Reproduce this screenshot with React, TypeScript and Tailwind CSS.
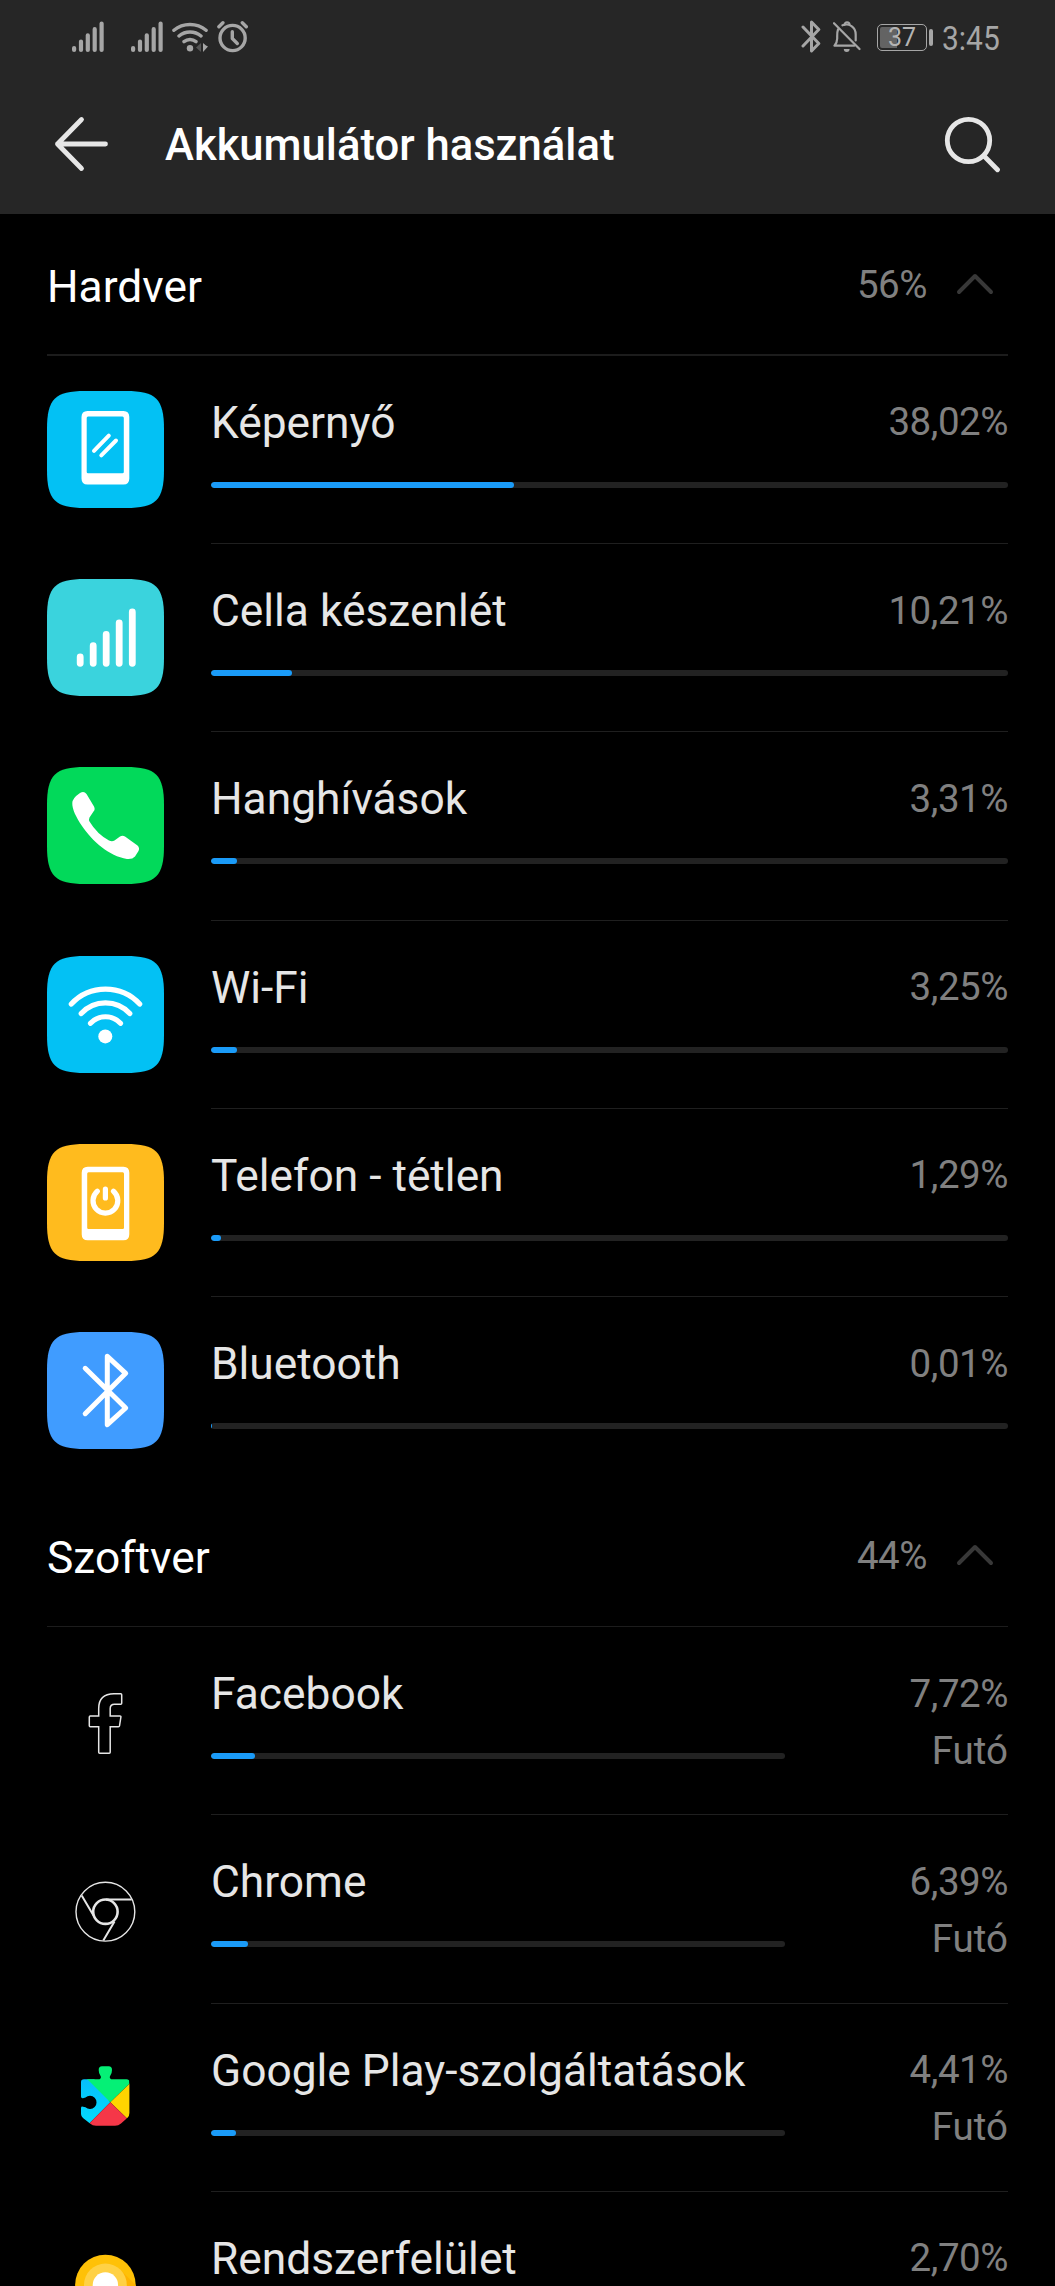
import type { ReactNode } from "react";

type UsageItem = {
  name: string;
  value: string;
  percent: number;
  icon: ReactNode;
  running?: boolean;
};

/* Status bar */

function SignalBars() {
  return (
    <svg width="32" height="32" viewBox="0 0 32 32" stroke="#a6a6a6" strokeWidth="4.2" strokeLinecap="round">
      <path d="M2.1 27v2M9 20.5v8.5M15.8 14.3v14.7M22.7 8.2v20.8M29.6 2.6v26.4" />
    </svg>
  );
}

function StatusWifi() {
  return (
    <svg className="ml-[9px]" width="36" height="32" viewBox="0 0 36 32" fill="none" stroke="#a6a6a6" strokeWidth="3.4" strokeLinecap="round">
      <path d="M1.9 9.3A25 25 0 0 1 34.1 9.3M7 15A17 17 0 0 1 29 15M12 20.6A9.5 9.5 0 0 1 24 20.6" />
      <circle cx="18" cy="27.2" r="3.2" fill="#a6a6a6" stroke="none" />
      <path d="M29 22v9l-5-4.5z" fill="#555" stroke="none" />
      <path d="M31 22v9l5-5.5-2-1z" fill="#a6a6a6" stroke="none" />
    </svg>
  );
}

function AlarmIcon() {
  return (
    <svg className="ml-[9px]" width="32" height="32" viewBox="0 0 32 32" fill="none" stroke="#a6a6a6" strokeWidth="3.4" strokeLinecap="round" strokeLinejoin="round">
      <circle cx="15.6" cy="17" r="12.6" />
      <path d="M15.3 10.7v6.8l5 5" />
      <path d="M1.9 5.8l4-4M29.3 5.8l-4-4" />
    </svg>
  );
}

function StatusBluetooth() {
  return (
    <svg width="20" height="33" viewBox="0 0 20 33" fill="none" stroke="#a6a6a6" strokeWidth="3" strokeLinejoin="round" strokeLinecap="round">
      <path d="M2 7l15.8 16.5-7.3 7.5V2l7.3 7.5L2 26" />
    </svg>
  );
}

function BellOff() {
  return (
    <svg className="ml-[12px]" width="28" height="32" viewBox="0 0 28 32" fill="none" stroke="#a6a6a6" strokeWidth="2.2" strokeLinecap="round" strokeLinejoin="round">
      <path d="M5 8.5C4 11 4.2 14 4.2 17.5c0 3.5-.8 4.8-2.7 7.2h19.7M9.5 4.3c6.5-2.5 13.2 1.5 13.2 9.2v6" />
      <path d="M11.5 3.8c0-3.2 5-3.2 5 0" />
      <path d="M1 2.2l25.5 25.8" />
      <path d="M10.8 28h5.8a2.9 2.9 0 0 1-5.8 0z" fill="#a6a6a6" stroke="none" />
    </svg>
  );
}

function Battery({ level }: { level: number }) {
  return (
    <div className="ml-[16px] flex items-center gap-[2px] pt-[2px]">
      <div className="relative flex h-[27px] w-[50px] items-center justify-center rounded-[5px] border border-[#a6a6a6]">
        <div className="absolute top-[2px] bottom-[2px] left-[2px] rounded-l-[2px] bg-[#636363]" style={{ width: level * 0.46 }} />
        <span className="relative text-[25px] leading-none text-[#b4b4b4]">{level}</span>
      </div>
      <div className="h-[17px] w-[4px] rounded-[2px] bg-[#a6a6a6]" />
    </div>
  );
}

function StatusBar() {
  return (
    <div className="flex h-[73px] items-center justify-between pr-[55px] pl-[72px]">
      <div className="flex items-center">
        <SignalBars />
        <div className="w-[27px]" />
        <SignalBars />
        <StatusWifi />
        <AlarmIcon />
      </div>
      <div className="flex items-center">
        <StatusBluetooth />
        <BellOff />
        <Battery level={37} />
        <span className="ml-[9px] w-[58px] origin-left scale-x-[0.88] pt-[3px] text-[34px] leading-[40px] text-[#a6a6a6]">3:45</span>
      </div>
    </div>
  );
}

/* Item icons, all drawn on a 117px tile */

function Tile({ fill, children }: { fill?: string; children: ReactNode }) {
  return (
    <svg className="block shrink-0" width="117" height="117" viewBox="0 0 117 117" fill="none">
      {fill && (
        <path fill={fill} d="M0 38C0 8 8 0 38 0H79C109 0 117 8 117 38V79C117 109 109 117 79 117H38C8 117 0 109 0 79Z" />
      )}
      {children}
    </svg>
  );
}

const screenIcon = (
  <Tile fill="#03c1f4">
    <path
      fill="#fff"
      fillRule="evenodd"
      d="M40.5 20H76.5Q82.3 20 82.3 26V87.5Q82.3 93.5 76.5 93.5H40.5Q34.5 93.5 34.5 87.5V26Q34.5 20 40.5 20ZM41 25.5Q39.7 25.5 39.7 27V81Q39.7 82.3 41 82.3H75.5Q76.8 82.3 76.8 81V27Q76.8 25.5 75.5 25.5Z"
    />
    <path d="M47 59.8L61.8 44.7M54.3 64.3L69 49.5" stroke="#fff" strokeWidth="4" strokeLinecap="round" />
  </Tile>
);

const cellIcon = (
  <Tile fill="#3ad3dd">
    <path d="M33.2 78v6.3M46.2 66.7v17.6M59.2 55.4v28.9M72.2 43.8v40.5M85.3 33v51.3" stroke="#fff" strokeWidth="6.8" strokeLinecap="round" />
  </Tile>
);

const callIcon = (
  <Tile fill="#02d95a">
    <path
      fill="#fff"
      d="M33 26Q37 23.5 39.5 27L47 39.5Q48.5 42.5 46.5 44.5L42.5 50.5Q41.5 52.5 42.5 54.5Q50 67 62 73.5Q65 75 67.5 73.5L73 69.5Q75.5 68 78 69.5L90.5 78.5Q93 81 91.5 84L88 89.5Q85.5 92.5 80 92C62 89 45 74 35 59C29 50 25 42 25.3 36Q25.5 31 33 26Z"
    />
  </Tile>
);

const wifiIcon = (
  <Tile fill="#03c1f4">
    <path
      d="M24.3 48A46.8 46.8 0 0 1 92.7 48M34.2 57.5A33 33 0 0 1 82.8 57.5M43.5 67.3A20.5 20.5 0 0 1 73.5 67.3"
      stroke="#fff"
      strokeWidth="5.2"
      strokeLinecap="round"
    />
    <circle cx="58.3" cy="80.4" r="7" fill="#fff" />
  </Tile>
);

const idleIcon = (
  <Tile fill="#ffbb1e">
    <path
      fill="#fff"
      fillRule="evenodd"
      d="M40.7 22.7H76.5Q82.3 22.7 82.3 28.7V90.3Q82.3 96.3 76.5 96.3H40.7Q34.7 96.3 34.7 90.3V28.7Q34.7 22.7 40.7 22.7ZM41.5 28.3Q40.2 28.3 40.2 29.8V83.7Q40.2 85 41.5 85H75.7Q77 85 77 83.7V29.8Q77 28.3 75.7 28.3Z"
    />
    <path d="M50.3 47.3A12.4 12.4 0 1 0 66.5 47.3M58.4 45.2V54" stroke="#fff" strokeWidth="5.2" strokeLinecap="round" />
  </Tile>
);

const bluetoothIcon = (
  <Tile fill="#409cff">
    <path d="M38.2 36.3L78.7 76L60.3 92.7V24.3L78.7 41.3L38.2 81.7" stroke="#fff" strokeWidth="5" strokeLinecap="round" strokeLinejoin="round" />
  </Tile>
);

const facebookIcon = (
  <Tile>
    <path
      d="M73.7 31.7Q74.7 31.7 74.7 32.7V41.2Q74.7 42.2 73.7 42.2H67.5Q63.2 42.2 63.2 46.5V54H73Q74 54 73.9 55L72.5 63.9Q72.3 64.8 71.4 64.8H63.2V90.3Q63.2 91.3 62.2 91.3H52.7Q51.7 91.3 51.7 90.3V64.8H43.3Q42.3 64.8 42.3 63.8V55Q42.3 54 43.3 54H51.7V46.5C51.7 36 58 31.7 67 31.7Z"
      stroke="#e6e6e6"
      strokeWidth="1.5"
    />
  </Tile>
);

const chromeIcon = (
  <Tile>
    <g stroke="#e6e6e6">
      <circle cx="58.4" cy="61.7" r="29.4" strokeWidth="1.4" />
      <circle cx="58.4" cy="61.7" r="12.2" strokeWidth="2.6" />
      <path d="M59 49.4H84.7M34.7 45.4L46.5 65.5M56.3 90.6L67.5 71.5" strokeWidth="2" />
    </g>
  </Tile>
);

const playServicesIcon = (
  <Tile>
    <clipPath id="puzzle">
      <path d="M37 40.2H52.5Q55 39 53.2 36.3Q51.7 34 51.7 31Q51.7 27.3 55 27.3H61.7Q65 27.3 65 31Q65 34 63.5 36.3Q61.7 39 64.2 40.2H79.5Q82.4 40.2 82.4 43V74Q82.4 77 80.5 78.7L74 84.5Q71.5 86.7 68 86.7H49Q45.5 86.7 43 84.5L36 79Q34 77.3 34 75V69Q34 67.3 36 67.7L38.5 68.3A6.6 6.6 0 1 0 38.5 58.5L36 59.2Q34 59.5 34 57.5V43Q34 40.2 37 40.2Z" />
    </clipPath>
    <linearGradient id="playBlue" x1="0" y1="0" x2="0" y2="1">
      <stop stopColor="#07b7fb" />
      <stop offset="1" stopColor="#02e0fd" />
    </linearGradient>
    <g clipPath="url(#puzzle)">
      <path fill="url(#playBlue)" d="M30 30H40.3L63.3 63.3L43 83.7L38 92H30Z" />
      <path fill="#05f076" d="M40.3 40.3V20H82.4V44.8L63.3 63.3Z" />
      <path fill="#ffd400" d="M83 44.2L63.3 63.3L79.3 78.7L86 84Z" />
      <path fill="#f53748" d="M63.3 63.3L43 83.7L40 90H86L79.3 78.7Z" />
    </g>
  </Tile>
);

const systemUiIcon = (
  <Tile>
    <circle cx="58.4" cy="58" r="30.3" fill="#ffc107" />
    <path fill="#ffb300" d="M73.5 43L88.7 58V75L58 58Z" />
    <circle cx="58.4" cy="58" r="21.4" fill="#ffd145" />
    <circle cx="58.4" cy="58" r="12.7" fill="#fff" />
  </Tile>
);

const HARDWARE: UsageItem[] = [
  { name: "Képernyő", value: "38,02%", percent: 38.02, icon: screenIcon },
  { name: "Cella készenlét", value: "10,21%", percent: 10.21, icon: cellIcon },
  { name: "Hanghívások", value: "3,31%", percent: 3.31, icon: callIcon },
  { name: "Wi-Fi", value: "3,25%", percent: 3.25, icon: wifiIcon },
  { name: "Telefon - tétlen", value: "1,29%", percent: 1.29, icon: idleIcon },
  { name: "Bluetooth", value: "0,01%", percent: 0.01, icon: bluetoothIcon },
];

const SOFTWARE: UsageItem[] = [
  { name: "Facebook", value: "7,72%", percent: 7.72, icon: facebookIcon, running: true },
  { name: "Chrome", value: "6,39%", percent: 6.39, icon: chromeIcon, running: true },
  { name: "Google Play-szolgáltatások", value: "4,41%", percent: 4.41, icon: playServicesIcon, running: true },
  { name: "Rendszerfelület", value: "2,70%", percent: 2.7, icon: systemUiIcon },
];

function UsageRow({ item, last }: { item: UsageItem; last: boolean }) {
  return (
    <li className="flex h-[188.25px] gap-[47px]">
      <div className="pt-[35.1px]">{item.icon}</div>
      <div className={`flex flex-1 justify-between ${last ? "" : "border-b border-[#1f1f1f]"}`}>
        <div className={item.running ? "w-[574px]" : "flex-1"}>
          <div className="pt-[41px] text-[44.3px] leading-[52px] whitespace-nowrap text-[#e6e6e6]">{item.name}</div>
          <div className={`mt-[33px] h-[6px] overflow-hidden rounded-full bg-[#222222] ${item.running ? "" : "-mr-[123px]"}`}>
            <div className="h-full min-w-px rounded-full bg-[#1a9bf8]" style={{ width: `${item.percent}%` }} />
          </div>
        </div>
        <div className={`pt-[37.6px] text-right text-[38.5px] leading-[57px] text-[#808080] ${item.running ? "" : "w-[123px]"}`}>
          <div className="tracking-[-0.45px]">{item.value}</div>
          {item.running && <div>Futó</div>}
        </div>
      </div>
    </li>
  );
}

function UsageSection({ title, total, items }: { title: string; total: string; items: UsageItem[] }) {
  return (
    <section>
      <div className="flex h-[140.25px] items-center">
        <h2 className="flex-1 pt-[5px] text-[44.3px] leading-[52px] text-white">{title}</h2>
        <span className="pt-[2px] text-[38.5px] leading-[48px] tracking-[-0.45px] text-[#808080]">{total}</span>
        <svg className="mr-[14px] ml-[29px]" width="38" height="22" viewBox="0 0 38 22" fill="none" stroke="#383838" strokeWidth="4" strokeLinecap="round" strokeLinejoin="round">
          <path d="M3 19L19 3L35 19" />
        </svg>
      </div>
      <div className="h-[1.5px] bg-[#1c1c1c]" />
      <ul>
        {items.map((item, i) => (
          <UsageRow key={item.name} item={item} last={i === items.length - 1} />
        ))}
      </ul>
    </section>
  );
}

export default function App() {
  return (
    <div className="h-[2286px] w-[1055px] overflow-hidden bg-black font-['Roboto',sans-serif]">
      <header className="h-[214px] bg-[#262626]">
        <StatusBar />
        <div className="flex h-[141px] items-center pr-[53px] pl-[54px]">
          <svg width="56" height="56" viewBox="0 0 56 56" fill="none" stroke="#e6e6e6" strokeWidth="4.8" strokeLinecap="round" strokeLinejoin="round">
            <path d="M51.5 28H3.5M27.5 3.5L3.5 28L27.5 52.5" />
          </svg>
          <h1 className="ml-[55px] flex-1 pt-[5px] text-[43.6px] leading-[52px] font-medium text-white">Akkumulátor használat</h1>
          <svg width="58" height="58" viewBox="0 0 58 58" fill="none" stroke="#e6e6e6" strokeWidth="4.8" strokeLinecap="round">
            <circle cx="24.5" cy="25.5" r="21.2" />
            <path d="M40.5 41.5L53.5 54.7" />
          </svg>
        </div>
      </header>
      <main className="px-[47px]">
        <UsageSection title="Hardver" total="56%" items={HARDWARE} />
        <UsageSection title="Szoftver" total="44%" items={SOFTWARE} />
      </main>
    </div>
  );
}
